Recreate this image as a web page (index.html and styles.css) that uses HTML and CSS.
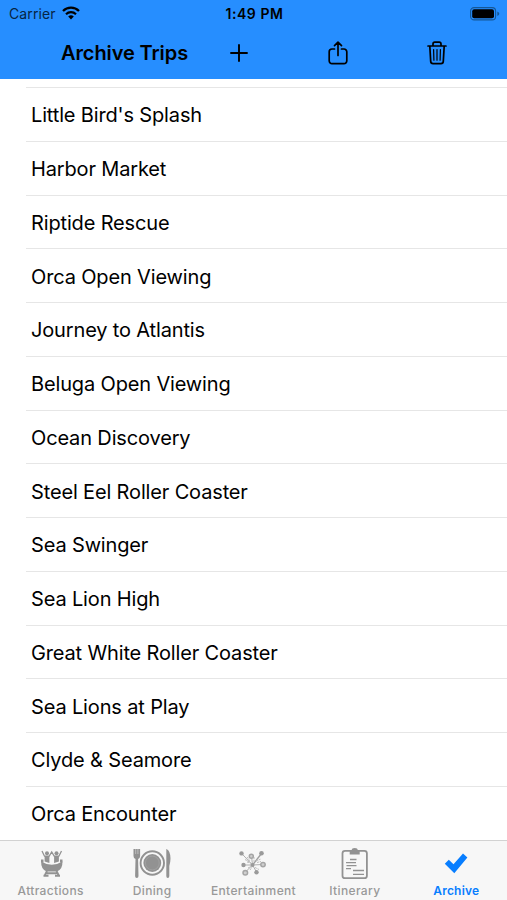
FILE: index.html
```html
<!DOCTYPE html>
<html lang="en">
<head>
    <meta charset="UTF-8">
    <meta name="viewport" content="width=device-width, initial-scale=1.0">
    <title>Archive Trips</title>
    <link rel="stylesheet" href="styles.css">
</head>
<body>
    <div class="app">
        <header class="header">
            <div class="status-bar">
                <div class="carrier">
                    <span>Carrier</span>
                    <svg class="wifi" viewBox="0 0 18 14" width="18" height="14">
                        <path d="M1 5a11.4 11.4 0 0 1 16 0" fill="none" stroke="#000" stroke-width="2.3"/>
                        <path d="M4 8.2a7.2 7.2 0 0 1 10 0" fill="none" stroke="#000" stroke-width="2.2"/>
                        <path d="M9 13.5l-2.8-2.9a4 4 0 0 1 5.6 0z"/>
                    </svg>
                </div>
                <div class="clock">1:49 PM</div>
                <svg class="battery" viewBox="0 0 30 14" width="30" height="14">
                    <rect x=".6" y=".6" width="25" height="12.3" rx="3.5" fill="none" stroke="#155796" stroke-width="1.1"/>
                    <rect x="2.2" y="2.2" width="21.8" height="9.1" rx="2"/>
                    <path d="M27.3 4.6q2 .8 2 2.2t-2 2.2z" fill="#155796"/>
                </svg>
            </div>
            <div class="nav-bar">
                <h1>Archive Trips</h1>
                <button class="nav-button" aria-label="Add">
                    <svg viewBox="0 0 18 18" width="18" height="18">
                        <path d="M9 1v16M1 9h16" stroke="#000" stroke-width="1.9" stroke-linecap="round"/>
                    </svg>
                </button>
                <button class="nav-button" aria-label="Share">
                    <svg viewBox="0 0 20 24" width="20" height="24" fill="none" stroke="#000" stroke-width="1.7" stroke-linecap="round" stroke-linejoin="round">
                        <path d="M6.5 8H4a2.8 2.8 0 0 0-2.8 2.8v9A2.8 2.8 0 0 0 4 22.6h12a2.8 2.8 0 0 0 2.8-2.8v-9A2.8 2.8 0 0 0 16 8h-2.5M10 14.5V1.3M6.5 4.6L10 1.2l3.5 3.4"/>
                    </svg>
                </button>
                <button class="nav-button" aria-label="Delete">
                    <svg viewBox="0 0 20 24" width="20" height="24" fill="none" stroke="#000" stroke-width="1.7" stroke-linecap="round" stroke-linejoin="round">
                        <path d="M1 5h18M6 4.8V3q0-1.8 1.8-1.8h4.4Q14 1.2 14 3v1.8M2.8 5l.9 15.4q.1 2.2 2.3 2.2h8q2.2 0 2.3-2.2L17.2 5"/>
                        <path d="M6.6 8.5l.3 10.7M10 8.5v10.7M13.4 8.5l-.3 10.7" stroke-width="1.2"/>
                    </svg>
                </button>
            </div>
        </header>

        <ul class="trip-list">
            <li>Little Bird's Splash</li>
            <li>Harbor Market</li>
            <li>Riptide Rescue</li>
            <li>Orca Open Viewing</li>
            <li>Journey to Atlantis</li>
            <li>Beluga Open Viewing</li>
            <li>Ocean Discovery</li>
            <li>Steel Eel Roller Coaster</li>
            <li>Sea Swinger</li>
            <li>Sea Lion High</li>
            <li>Great White Roller Coaster</li>
            <li>Sea Lions at Play</li>
            <li>Clyde &amp; Seamore</li>
            <li>Orca Encounter</li>
        </ul>

        <nav class="tab-bar">
            <a class="tab">
                <svg viewBox="0 0 40 36" width="40" height="36" fill="#929292">
                    <path d="M10.2 16.5q5 3.2 10.6 3.200t10.600-3.200q.5 7.500-5.400 10H15.600q-5.900-2.500-5.400-10z"/>
                    <circle cx="16" cy="8.300" r="2"/>
                    <circle cx="25.500" cy="8.300" r="2"/>
                    <path d="M11 6l2.500 5.200h4.700L20.700 7l2.500 4.200h4.700L30.500 6" fill="none" stroke="#929292" stroke-width="1.300"/>
                    <path d="M13.600 11h4.800v7l-4.800-1.500zM23.100 11h4.800v5.500L23.100 18zM10 14.500h2.500v3H10zM29 14.500h2.500v3H29z"/>
                    <path d="M16 26l-2.500 5M25.500 26l2.500 5M12.500 30.800h5M24 30.800h5M16 28.200h9.500" fill="none" stroke="#929292" stroke-width="1.900"/>
                </svg>
                <span>Attractions</span>
            </a>
            <a class="tab">
                <svg viewBox="0 0 40 36" width="40" height="36" fill="#929292">
                    <path d="M1.500 4v7q0 2.500 2 3l-.4 17q0 2 1.700 2t1.700-2L6.100 14q2-.5 2-3V4z"/>
                    <path d="M3.700 4v5M5.900 4v5" stroke="#d0d0d0" stroke-width=".7"/>
                    <circle cx="20.300" cy="18" r="11.700" fill="none" stroke="#929292" stroke-width="1.900"/>
                    <circle cx="20.300" cy="18" r="8.900"/>
                    <circle cx="20.300" cy="18" r="6.900" fill="none" stroke="#a8a8a8" stroke-width=".6"/>
                    <path d="M34.500 4q4 2 4 9.500 0 4-1.200 7.500v10q0 2-1.500 2t-1.500-2V4z"/>
                </svg>
                <span>Dining</span>
            </a>
            <a class="tab">
                <svg viewBox="0 0 40 36" width="40" height="36" fill="none" stroke="#b0b0b0" stroke-width="1">
                    <path d="M19.500 20l9-11.500" stroke="#a0a0a0" stroke-width="1.400"/>
                    <path d="M19.500 20L8.500 8.300M19.500 20l-9 0M19.500 20l10-.5M19.500 20l-7 7M19.500 20l4 7M19.500 20l-1-9"/>
                    <path d="M12 14.500l5 3M14 12l3 4M15 23l3-1.500M23 16l5-2M24 17.500l4-1M22 22.500l4 2M17 25l2-3M21 12l0 5M14 17l4 1" stroke="#bcbcbc" stroke-dasharray="2 .8"/>
                    <g fill="#9a9a9a" stroke="none">
                        <circle cx="8.500" cy="8.400" r="2.200"/>
                        <circle cx="28.500" cy="8.300" r="2.300"/>
                        <circle cx="10.500" cy="20" r="2.200"/>
                        <circle cx="23.500" cy="27.300" r="2.200"/>
                        <circle cx="19.500" cy="20" r="2"/>
                    </g>
                    <g fill="#cfcfcf" stroke="#a5a5a5" stroke-width="1.500">
                        <circle cx="18.300" cy="11.200" r="2"/>
                        <circle cx="30" cy="19.600" r="2.200"/>
                        <circle cx="12.300" cy="27.700" r="2.300"/>
                    </g>
                </svg>
                <span>Entertainment</span>
            </a>
            <a class="tab">
                <svg viewBox="0 0 40 36" width="40" height="36" fill="none" stroke="#929292">
                    <rect x="7.500" y="5.800" width="24.400" height="27.400" rx="2.500" stroke-width="1.800"/>
                    <path d="M14.700 9.500V6.500q0-1.300 2-1.500 0-2 3-2t3 2q2 .2 2 1.500v3z" fill="#929292" stroke="none"/>
                    <path d="M15 14.500h6.500M11 17.600h10M11.500 20.600h10M11 23.700h5M18 25.500h11M18 29.300h11" stroke-width="1.300"/>
                </svg>
                <span>Itinerary</span>
            </a>
            <a class="tab active">
                <svg viewBox="0 0 40 36" width="40" height="36">
                    <path d="M8.800 18.800l4-4 4.700 4.500 9.500-10.800 4.400 4L18.300 28.300z" fill="#087eff"/>
                </svg>
                <span>Archive</span>
            </a>
        </nav>
    </div>
</body>
</html>
```

FILE: styles.css
```css
* {
    box-sizing: border-box;
}
body {
    margin: 0;
    font-family: Inter, "Liberation Sans", sans-serif;
    background-color: #fff;
    color: #000;
}
.app {
    display: flex;
    flex-direction: column;
    height: 900px;
    overflow: hidden;
}
.header {
    flex: none;
    height: 79px;
    background-color: #268eff;
}
.status-bar {
    display: grid;
    grid-template-columns: 1fr auto 1fr;
    align-items: center;
    height: 27px;
    padding: 0 7px 0 9px;
    font-size: 14px;
}
.carrier {
    display: flex;
    align-items: center;
    gap: 6px;
    color: #062544;
    letter-spacing: 0.1px;
}
.wifi {
    margin-top: -2px;
}
.clock {
    font-weight: 600;
    letter-spacing: 0.55px;
}
.battery {
    justify-self: end;
}
.nav-bar {
    display: grid;
    grid-template-columns: 188px 101px 97px 102px;
    align-items: center;
    height: 51px;
}
.nav-bar h1 {
    margin: 0;
    padding-left: 61px;
    font-size: 20px;
    font-weight: 600;
    letter-spacing: -0.1px;
    white-space: nowrap;
}
.nav-button {
    display: flex;
    justify-content: center;
    padding: 0;
    border: 0;
    background: none;
}
.trip-list {
    flex: 1;
    min-height: 0;
    margin: 0;
    padding: 8px 0 0 26px;
    overflow: hidden;
    list-style: none;
}
.trip-list li {
    display: flex;
    align-items: center;
    height: 53.75px;
    padding: 2px 0 0 5px;
    border-top: 1px solid #e6e6e6;
    font-size: 20px;
    letter-spacing: -0.15px;
}
.tab-bar {
    flex: none;
    display: grid;
    grid-template-columns: repeat(5, 1fr);
    height: 60px;
    border-top: 1px solid #d2d2d2;
    background-color: #f7f7f7;
}
.tab {
    display: flex;
    flex-direction: column;
    align-items: center;
    padding-top: 4px;
    color: #999;
    font-size: 12px;
    font-weight: 500;
    letter-spacing: 0.35px;
    line-height: 20px;
}
.active {
    color: #087eff;
    font-weight: 600;
    letter-spacing: 0.2px;
}
```
